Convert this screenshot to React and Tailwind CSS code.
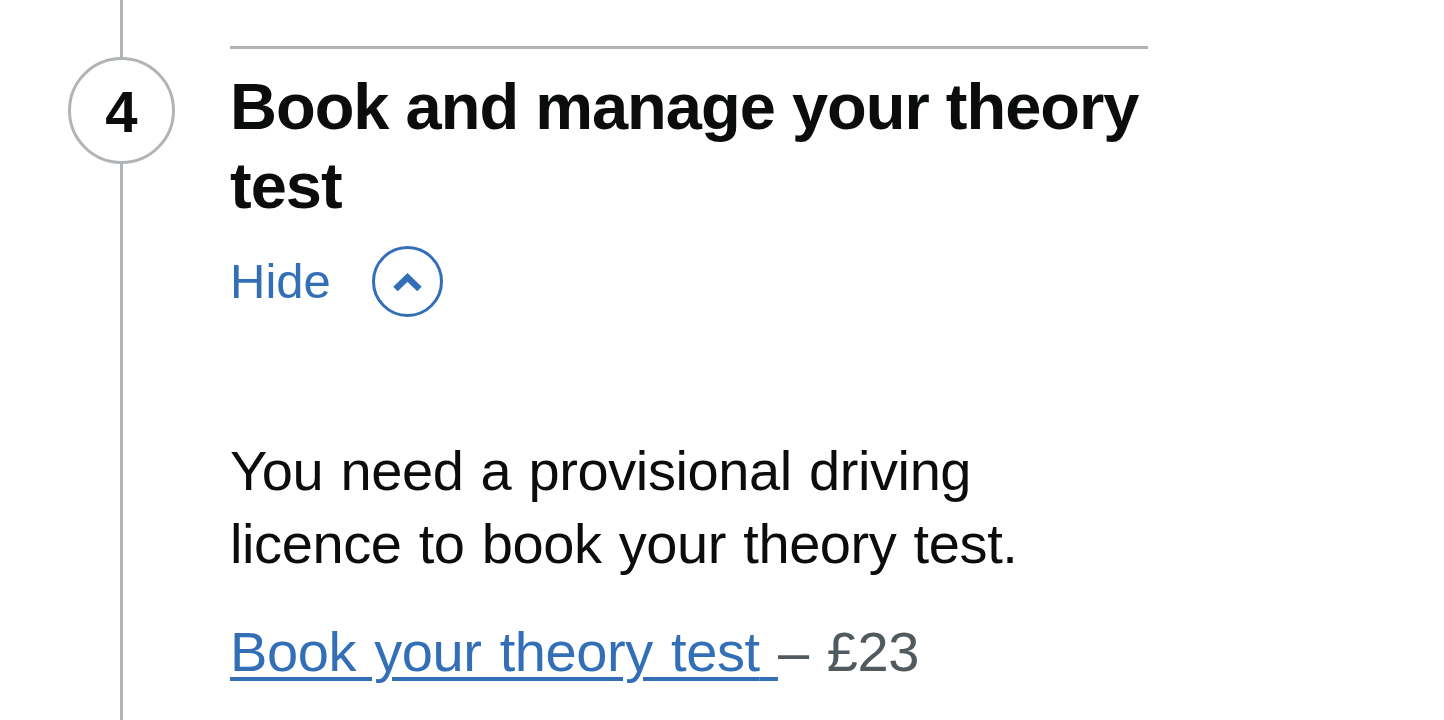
// App.jsx
// GOV.UK step-by-step navigation, step 4 expanded

export default function App() {
  return (
    <div className="flex h-[720px] overflow-hidden bg-white font-['Liberation_Sans',Arial,sans-serif] text-[#0b0c0c]">
      {/* step marker column */}
      <div className="ml-[68px] flex w-[107px] shrink-0 flex-col items-center">
        <div className="h-[57px] w-[3px] bg-[#b1b4b6]" />
        <div className="flex size-[107px] shrink-0 items-center justify-center rounded-full border-[3px] border-[#b1b4b6] pt-[2px] text-[58px] font-bold leading-none">
          4
        </div>
        <div className="w-[3px] flex-1 bg-[#b1b4b6]" />
      </div>

      {/* step content */}
      <div className="ml-[55px] w-[918px] shrink-0 pt-[46px]">
        <div className="h-[3px] bg-[#b1b4b6]" />

        <h2 className="mt-[18px] text-[65px] font-bold leading-[79px] tracking-[-1px]">
          Book and manage your theory test
        </h2>

        <div className="mt-[21px] flex h-[71px] items-center">
          <span className="text-[49px] leading-[71px] text-[#336fb7]">Hide</span>
          <span className="ml-[41px] flex size-[71px] items-center justify-center rounded-full border-[3px] border-[#336fb7]">
            <svg viewBox="0 0 65 65" className="size-[65px]" fill="none">
              <path
                d="M20.5 40 L32.5 28.5 L44.5 40"
                stroke="#336fb7"
                strokeWidth="6.5"
                strokeLinejoin="miter"
              />
            </svg>
          </span>
        </div>

        <p className="mt-[117px] max-w-[820px] text-[56px] leading-[73px] tracking-[-0.4px] [word-spacing:2px]">
          You need a provisional driving licence to book your theory test.
        </p>

        <p className="mt-[35px] text-[56px] leading-[73px] tracking-[-0.4px] text-[#505a5f] [word-spacing:3px]">
          <a
            href="#"
            className="text-[#336fb7] underline decoration-[4px] underline-offset-[6px]"
          >
            Book your theory test{' '}
          </a>
          – £23
        </p>
      </div>
    </div>
  );
}
